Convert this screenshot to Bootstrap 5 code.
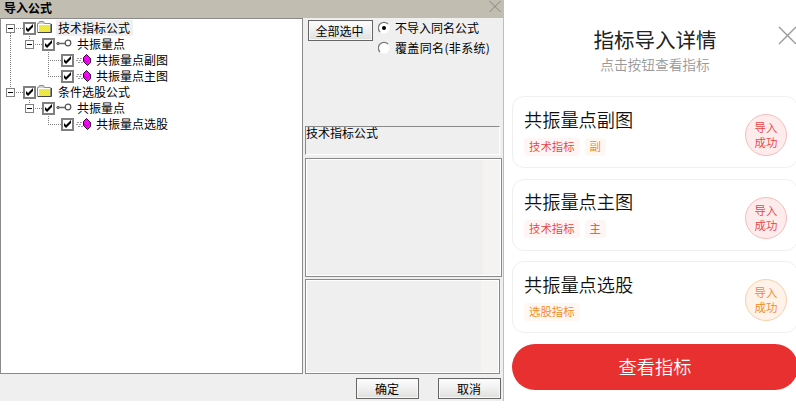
<!DOCTYPE html>
<html lang="zh-CN">
  <head>
    <meta charset="utf-8" />
    <meta name="viewport" content="width=device-width, initial-scale=1" />
    <title>导入公式</title>
    <link
      href="https://cdn.jsdelivr.net/npm/bootstrap@5.3.3/dist/css/bootstrap.min.css"
      rel="stylesheet"
    />
    <style>
      body {
        background-color: #fff;
        font-family: "Noto Sans CJK SC", sans-serif;
        overflow: hidden;
      }
      /* import dialog */
      .dialog {
        width: 504px;
        height: 401px;
        background-color: #efefef;
        border-right: 1px solid #c2bdb1;
        color: #000;
        font-size: 12px;
        line-height: 16px;
      }
      .titleBar {
        height: 18px;
        background-color: #c2bdb1;
        padding-left: 4px;
        margin-right: -1px;
        padding-right: 3px;
        line-height: 15px;
      }
      .treeBox {
        width: 303px;
        height: 356px;
        background-color: #fff;
        border: 1px solid #8a8a8c;
        padding-top: 1px;
      }
      .treeRow {
        height: 16px;
      }
      .guide {
        width: 19px;
        height: 16px;
        overflow: visible;
      }
      .tick {
        width: 13px;
        height: 13px;
        margin-left: 3px;
      }
      .nodeIcon {
        width: 16px;
        height: 16px;
        margin: 0 3px 0 1px;
      }
      .nodeText {
        padding: 0 1px 0 2px;
      }
      .picked {
        background-color: #f0f0f0;
        padding-right: 3px;
      }
      .sidePane {
        width: 200px;
        padding: 2px 0 0 2px;
      }
      .winBtn {
        height: 21px;
        width: 63px;
        border: 1px solid #666;
        box-shadow: inset 0 0 0 1px #f8f8f8;
        background: linear-gradient(#fdfdfd, #f0f0f0 50%, #dfdfdc);
        border-radius: 0;
        padding: 0 1px 0 0;
        font-size: 12px;
        line-height: 17px;
        color: #000;
      }
      .winBtn.wide {
        width: 65px;
        margin: 0 5px 0 3px;
        padding-right: 2px;
      }
      .optRow {
        height: 20px;
        gap: 5px;
      }
      .parens {
        letter-spacing: 0.35px;
      }
      .options {
        height: 106px;
      }
      .noteBox {
        width: 195px;
        height: 29px;
        border: 1px solid #fff;
        border-top-color: #8a8a8a;
        border-left-color: #8a8a8a;
        line-height: 12px;
      }
      .emptyBox {
        border: 1px solid #8a8a8c;
        box-shadow: inset 0 0 0 1px #fff;
        padding: 1px;
      }
      .emptyBox div {
        width: 17px;
        background-color: #f4f3f1;
      }
      .boxTop {
        width: 197px;
        height: 119px;
        margin-top: 3px;
      }
      .boxBottom {
        width: 195px;
        height: 95px;
        margin-top: 2px;
      }
      .footBar {
        padding: 4px 2px 0 0;
        gap: 19px;
      }
      /* phone sheet */
      .sheet {
        width: 292px;
        padding: 0 0 0 8px;
        font-weight: 350;
      }
      .sheetHead {
        height: 96px;
        padding: 24px 0 0 2px;
      }
      .sheetTitle {
        font-size: 20.5px;
        line-height: 30px;
        font-weight: 400;
        color: #222;
      }
      .sheetSub {
        font-size: 13.7px;
        line-height: 21px;
        color: #999;
      }
      .closeX {
        top: 26px;
        right: 0;
      }
      .itemCard {
        width: 286px;
        height: 72px;
        border: 1px solid #efefef;
        border-radius: 12px;
        padding: 0 10px 0 11px;
        margin-bottom: 10.5px;
      }
      .itemName {
        font-size: 18.2px;
        line-height: 24px;
        color: #111;
        margin: -2px 0 7px;
      }
      .pill {
        font-size: 11.4px;
        line-height: 17px;
        height: 18px;
        padding: 0 5px;
        border-radius: 4px;
      }
      .pill + .pill {
        margin-left: 5px;
      }
      .stamp {
        width: 42px;
        height: 42px;
        margin-top: 6px;
        font-size: 11.4px;
        line-height: 15px;
      }
      .hot {
        color: #ea4044;
        background-color: #fff5f5;
      }
      .warm {
        color: #f58720;
        background-color: #fff8f2;
      }
      .stamp.hot {
        background-color: #feecec;
        border: 1px solid #f7bcbc;
      }
      .stamp.warm {
        background-color: #fff2e8;
        border: 1px solid #fad0a8;
      }
      .viewBtn {
        width: 286px;
        height: 46px;
        background-color: #e83030;
        color: #fff;
        font-size: 18.2px;
        font-weight: 350;
        padding: 0;
        border: 0;
      }
    </style>
  </head>
  <body>
    <svg class="d-none">
      <defs>
        <g id="box">
          <rect x="6.5" y="4.5" width="8" height="8" fill="#fff" stroke="#808080" transform="translate(-1 0)" />
          <path d="M7 8.5h5" stroke="#000" />
          <path d="M15 8.5h7" stroke="#808080" stroke-dasharray="1 1" />
        </g>
        <path id="up" d="M9.5 0v4" stroke="#808080" stroke-dasharray="1 1" />
        <path id="down" d="M9.5 13v3" stroke="#808080" stroke-dasharray="1 1" />
        <path id="full" d="M9.5 0v16" stroke="#808080" stroke-dasharray="1 1" />
        <path id="half" d="M9.5 0v9" stroke="#808080" stroke-dasharray="1 1" />
        <path id="arm" d="M11 8.5h11" stroke="#808080" stroke-dasharray="1 1" />
        <symbol id="tick" viewBox="0 0 13 13">
          <rect x="1" y="1" width="11" height="11" fill="#fff" stroke="#808080" stroke-width="2" />
          <path d="M3 5v3l2 2 5-5V2L5 7z" fill="#000" />
        </symbol>
        <symbol id="folder" viewBox="0 0 16 16">
          <path d="M.5 12.5v-9h1l1-2h4l1 2h6v9z" fill="#d2d2c4" stroke="#8c8c8c" />
          <path d="M2 5.5h11M2 7.5h11M2 9.5h11M2 11.5h11" stroke="#f4f04a" stroke-dasharray="1 1" />
          <path d="M2 6.5h11M2 8.5h11M2 10.5h11" stroke="#f4f04a" stroke-dasharray="1 1" stroke-dashoffset="1" />
          <path d="M1.5 12V4.5H13" fill="none" stroke="#fff" />
          <path d="M1 12.5h13.5V4" fill="none" stroke="#444" />
        </symbol>
        <symbol id="key" viewBox="0 0 16 16">
          <path d="M3 7.5h7" stroke="#666" stroke-width="1.5" />
          <circle cx="2" cy="7.5" r="1.2" fill="#aaa" stroke="#555" />
          <circle cx="12" cy="7" r="2.8" fill="#fff" stroke="#555" stroke-width="1.2" />
        </symbol>
        <symbol id="gem" viewBox="0 0 16 16">
          <path d="M2 6.5h5M1 8.5h5M3 10.5h5" stroke="#999" stroke-dasharray="2 1" />
          <path d="M11.5 2.5l4 4v4l-3 3-4-4v-4z" fill="#f0f" stroke="#303" />
          <path d="M9 8l3 2 3-3" fill="none" stroke="#a000a0" stroke-width=".7" />
        </symbol>
      </defs>
    </svg>

    <div class="d-flex">
      <div class="dialog flex-shrink-0">
        <div class="titleBar d-flex justify-content-between">
          <b>导入公式</b>
          <svg width="12" height="13">
            <path d="M.5 1l11 11M11.5 1l-11 11" stroke="#858585" />
          </svg>
        </div>
        <div class="d-flex">
          <div class="treeBox">
            <div class="treeRow d-flex align-items-center">
              <svg class="guide"><use href="#box" /><use href="#down" /></svg>
              <svg class="tick"><use href="#tick" /></svg>
              <svg class="nodeIcon"><use href="#folder" /></svg>
              <span class="nodeText picked">技术指标公式</span>
            </div>
            <div class="treeRow d-flex align-items-center">
              <svg class="guide"><use href="#full" /></svg>
              <svg class="guide"><use href="#up" /><use href="#box" /></svg>
              <svg class="tick"><use href="#tick" /></svg>
              <svg class="nodeIcon"><use href="#key" /></svg>
              <span class="nodeText">共振量点</span>
            </div>
            <div class="treeRow d-flex align-items-center">
              <svg class="guide"><use href="#full" /></svg>
              <svg class="guide"></svg>
              <svg class="guide"><use href="#full" /><use href="#arm" /></svg>
              <svg class="tick"><use href="#tick" /></svg>
              <svg class="nodeIcon"><use href="#gem" /></svg>
              <span class="nodeText">共振量点副图</span>
            </div>
            <div class="treeRow d-flex align-items-center">
              <svg class="guide"><use href="#full" /></svg>
              <svg class="guide"></svg>
              <svg class="guide"><use href="#half" /><use href="#arm" /></svg>
              <svg class="tick"><use href="#tick" /></svg>
              <svg class="nodeIcon"><use href="#gem" /></svg>
              <span class="nodeText">共振量点主图</span>
            </div>
            <div class="treeRow d-flex align-items-center">
              <svg class="guide"><use href="#up" /><use href="#box" /></svg>
              <svg class="tick"><use href="#tick" /></svg>
              <svg class="nodeIcon"><use href="#folder" /></svg>
              <span class="nodeText">条件选股公式</span>
            </div>
            <div class="treeRow d-flex align-items-center">
              <svg class="guide"></svg>
              <svg class="guide"><use href="#up" /><use href="#box" /></svg>
              <svg class="tick"><use href="#tick" /></svg>
              <svg class="nodeIcon"><use href="#key" /></svg>
              <span class="nodeText">共振量点</span>
            </div>
            <div class="treeRow d-flex align-items-center">
              <svg class="guide"></svg>
              <svg class="guide"></svg>
              <svg class="guide"><use href="#half" /><use href="#arm" /></svg>
              <svg class="tick"><use href="#tick" /></svg>
              <svg class="nodeIcon"><use href="#gem" /></svg>
              <span class="nodeText">共振量点选股</span>
            </div>
          </div>

          <div class="sidePane">
            <div class="options d-flex">
              <button class="btn winBtn wide">全部选中</button>
              <div>
                <div class="optRow d-flex align-items-start">
                  <svg width="12" height="16">
                    <circle cx="6" cy="8" r="5.5" fill="#fff" />
                    <path d="M2 12A5.5 5.5 0 0 1 10 4" fill="none" stroke="#777" stroke-width="1.3" />
                    <circle cx="6" cy="8" r="2" fill="#000" />
                  </svg>
                  <span>不导入同名公式</span>
                </div>
                <div class="optRow d-flex align-items-start">
                  <svg width="12" height="16">
                    <circle cx="6" cy="8" r="5.5" fill="#fff" />
                    <path d="M2 12A5.5 5.5 0 0 1 10 4" fill="none" stroke="#777" stroke-width="1.3" />
                  </svg>
                  <span class="parens">覆盖同名(非系统)</span>
                </div>
              </div>
            </div>
            <div class="noteBox">技术指标公式</div>
            <div class="emptyBox boxTop d-flex justify-content-end"><div></div></div>
            <div class="emptyBox boxBottom d-flex justify-content-end"><div></div></div>
          </div>
        </div>
        <div class="footBar d-flex justify-content-end">
          <button class="btn winBtn">确定</button>
          <button class="btn winBtn">取消</button>
        </div>
      </div>

      <div class="sheet position-relative">
        <div class="sheetHead text-center">
          <div class="sheetTitle">指标导入详情</div>
          <div class="sheetSub">点击按钮查看指标</div>
          <svg class="closeX position-absolute" width="18" height="19">
            <path d="M1 1l17 17M18 1L1 18" stroke="#999" stroke-width="1.4" />
          </svg>
        </div>

        <div class="itemCard d-flex align-items-center justify-content-between">
          <div>
            <div class="itemName">共振量点副图</div>
            <div class="d-flex">
              <span class="pill hot">技术指标</span>
              <span class="pill warm">副</span>
            </div>
          </div>
          <div class="stamp hot rounded-circle d-flex flex-column align-items-center justify-content-center">
            <span>导入</span><span>成功</span>
          </div>
        </div>

        <div class="itemCard d-flex align-items-center justify-content-between">
          <div>
            <div class="itemName">共振量点主图</div>
            <div class="d-flex">
              <span class="pill hot">技术指标</span>
              <span class="pill hot">主</span>
            </div>
          </div>
          <div class="stamp hot rounded-circle d-flex flex-column align-items-center justify-content-center">
            <span>导入</span><span>成功</span>
          </div>
        </div>

        <div class="itemCard d-flex align-items-center justify-content-between">
          <div>
            <div class="itemName">共振量点选股</div>
            <div class="d-flex">
              <span class="pill warm">选股指标</span>
            </div>
          </div>
          <div class="stamp warm rounded-circle d-flex flex-column align-items-center justify-content-center">
            <span>导入</span><span>成功</span>
          </div>
        </div>

        <button class="btn viewBtn rounded-pill">查看指标</button>
      </div>
    </div>

    <script src="https://cdn.jsdelivr.net/npm/bootstrap@5.3.3/dist/js/bootstrap.bundle.min.js"></script>
  </body>
</html>
